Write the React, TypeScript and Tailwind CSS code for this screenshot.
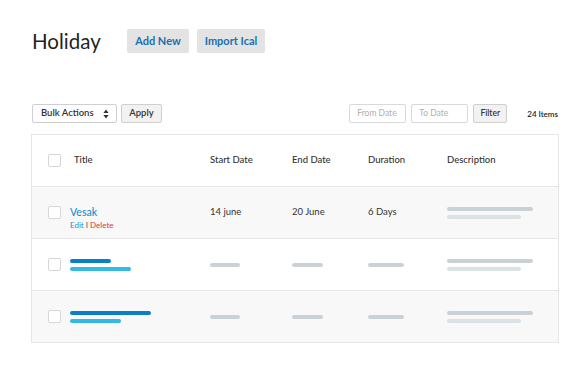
const cols = "grid grid-cols-[22px_140px_82px_76px_79px_1fr] items-center pl-[16px]";

function Checkbox() {
  return <div className="h-[13px] w-[13px] rounded-[2px] border border-[#d6d6d6] bg-white" />;
}

function Bar({ w, color, className = "" }: { w: number; color: string; className?: string }) {
  return <div className={`h-[4px] rounded-full ${color} ${className}`} style={{ width: w }} />;
}

function Desc() {
  return (
    <div className="flex flex-col gap-[4px]">
      <Bar w={86} color="bg-[#c9d1d6]" />
      <Bar w={74} color="bg-[#dbe2e6]" />
    </div>
  );
}

function SortArrows() {
  return (
    <svg width="6" height="10" viewBox="0 0 6 10" className="text-[#333]">
      <path d="M3 0.5 L5.6 4 H0.4 Z" fill="currentColor" />
      <path d="M3 9.5 L5.6 6 H0.4 Z" fill="currentColor" />
    </svg>
  );
}

export default function App() {
  return (
    <div className="h-[373px] w-[586px] bg-white font-['Lato',sans-serif] text-[#222]">
      <div className="flex items-center pl-[32px] pt-[29px]">
        <h1 className="w-[95px] text-[20.5px] leading-[24px] text-[#1f1f1f]">Holiday</h1>
        <button className="h-[24px] w-[62px] rounded-[2px] bg-[#e3e3e3] text-[11px] font-bold text-[#1a6fae]">
          Add New
        </button>
        <button className="ml-[8px] h-[24px] w-[68px] rounded-[2px] bg-[#e3e3e3] text-[11px] font-bold text-[#1a6fae]">
          Import Ical
        </button>
      </div>

      <div className="mt-[51px] flex items-center pl-[32px] pr-[28px]">
        <div className="flex h-[19px] w-[85px] items-center justify-between rounded-[2px] border border-[#cfcfcf] bg-white pl-[8px] pr-[7px] text-[9.5px] font-semibold text-[#333]">
          <span>Bulk Actions</span>
          <SortArrows />
        </div>
        <button className="ml-[4px] h-[19px] w-[41px] rounded-[2px] border border-[#cfcfcf] bg-[#f2f2f2] text-[9.5px] font-semibold text-[#333]">
          Apply
        </button>
        <div className="flex-1" />
        <div className="flex h-[19px] w-[57px] items-center rounded-[2px] border border-[#d9d9d9] bg-white pl-[7px] text-[8.5px] text-[#b0b0b0]">
          From Date
        </div>
        <div className="ml-[5px] flex h-[19px] w-[57px] items-center rounded-[2px] border border-[#d9d9d9] bg-white pl-[7px] text-[8.5px] text-[#b0b0b0]">
          To Date
        </div>
        <button className="ml-[5px] h-[19px] w-[34px] rounded-[2px] border border-[#cfcfcf] bg-[#f2f2f2] text-[8.5px] font-semibold text-[#333]">
          Filter
        </button>
        <span className="ml-[20px] text-[8px] font-semibold text-[#222]">24 Items</span>
      </div>

      <div className="ml-[31px] mt-[11px] w-[528px] border border-[#e6e6e6]">
        <div className={`${cols} h-[52px] border-b border-[#e6e6e6] bg-white text-[9.5px] font-medium text-[#333]`}>
          <Checkbox />
          <span className="pl-[4px]">Title</span>
          <span>Start Date</span>
          <span>End Date</span>
          <span>Duration</span>
          <span>Description</span>
        </div>

        <div className={`${cols} h-[52px] border-b border-[#e6e6e6] bg-[#f8f8f8] text-[9.5px] text-[#333]`}>
          <Checkbox />
          <div className="flex flex-col pt-[10px]">
            <span className="text-[10.5px] font-medium leading-[14px] text-[#1d8fca]">Vesak</span>
            <span className="text-[8px] leading-[12px]">
              <span className="text-[#1d8fca]">Edit</span>
              <span className="text-[#555]"> I </span>
              <span className="text-[#d8363d]">Delete</span>
            </span>
          </div>
          <span>14 june</span>
          <span>20 June</span>
          <span>6 Days</span>
          <Desc />
        </div>

        <div className={`${cols} h-[52px] border-b border-[#e6e6e6] bg-white`}>
          <Checkbox />
          <div className="flex flex-col gap-[4px]">
            <Bar w={41} color="bg-[#0a80c4]" />
            <Bar w={61} color="bg-[#34b8e4]" />
          </div>
          <Bar w={30} color="bg-[#cbd2d7]" />
          <Bar w={31} color="bg-[#cbd2d7]" />
          <Bar w={36} color="bg-[#cbd2d7]" />
          <Desc />
        </div>

        <div className={`${cols} h-[51px] bg-[#f8f8f8]`}>
          <Checkbox />
          <div className="flex flex-col gap-[4px]">
            <Bar w={81} color="bg-[#0a80c4]" />
            <Bar w={51} color="bg-[#34b8e4]" />
          </div>
          <Bar w={30} color="bg-[#cbd2d7]" />
          <Bar w={31} color="bg-[#cbd2d7]" />
          <Bar w={36} color="bg-[#cbd2d7]" />
          <Desc />
        </div>
      </div>
    </div>
  );
}
